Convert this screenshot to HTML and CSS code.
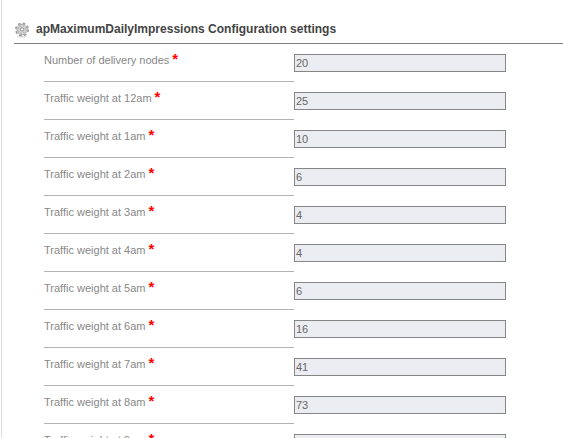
FILE: index.html
```html
<!DOCTYPE html>
<html lang="en">
<head>
    <meta charset="UTF-8">
    <meta name="viewport" content="width=device-width, initial-scale=1.0">
    <title>apMaximumDailyImpressions Configuration settings</title>
    <link rel="stylesheet" href="styles.css">
</head>
<body>
    <form class="settings">
        <div class="settings-header">
            <svg class="gear" viewBox="0 0 16 16" aria-hidden="true">
                <ellipse cx="8" cy="14.5" rx="5" ry="1" fill="#ddd"/>
                <circle cx="8" cy="7.5" r="6.2" fill="none" stroke="#999" stroke-width="1.6" stroke-dasharray="2.6 2.27"/>
                <circle cx="8" cy="7.5" r="5.2" fill="#dcdcdc" stroke="#aaa"/>
                <circle cx="8" cy="7.5" r="3.6" fill="none" stroke="#b4b4b4" stroke-width="1.4" stroke-dasharray="1.6 1.23"/>
                <circle cx="8" cy="7.5" r="1.7" fill="#fff" stroke="#909090"/>
            </svg>
            <h1>apMaximumDailyImpressions Configuration settings</h1>
        </div>
        <div class="rows">
            <div class="row">
                <label for="nodes">Number of delivery nodes<span class="required">*</span></label>
                <input type="text" id="nodes" value="20">
            </div>
            <div class="row">
                <label for="weight0">Traffic weight at 12am<span class="required">*</span></label>
                <input type="text" id="weight0" value="25">
            </div>
            <div class="row">
                <label for="weight1">Traffic weight at 1am<span class="required">*</span></label>
                <input type="text" id="weight1" value="10">
            </div>
            <div class="row">
                <label for="weight2">Traffic weight at 2am<span class="required">*</span></label>
                <input type="text" id="weight2" value="6">
            </div>
            <div class="row">
                <label for="weight3">Traffic weight at 3am<span class="required">*</span></label>
                <input type="text" id="weight3" value="4">
            </div>
            <div class="row">
                <label for="weight4">Traffic weight at 4am<span class="required">*</span></label>
                <input type="text" id="weight4" value="4">
            </div>
            <div class="row">
                <label for="weight5">Traffic weight at 5am<span class="required">*</span></label>
                <input type="text" id="weight5" value="6">
            </div>
            <div class="row">
                <label for="weight6">Traffic weight at 6am<span class="required">*</span></label>
                <input type="text" id="weight6" value="16">
            </div>
            <div class="row">
                <label for="weight7">Traffic weight at 7am<span class="required">*</span></label>
                <input type="text" id="weight7" value="41">
            </div>
            <div class="row">
                <label for="weight8">Traffic weight at 8am<span class="required">*</span></label>
                <input type="text" id="weight8" value="73">
            </div>
            <div class="row">
                <label for="weight9">Traffic weight at 9am<span class="required">*</span></label>
                <input type="text" id="weight9">
            </div>
        </div>
    </form>
</body>
</html>
```

FILE: styles.css
```css
* {
    box-sizing: border-box;
}
body {
    font-family: Arial, "Liberation Sans", sans-serif;
    font-size: 11px;
    margin: 0;
    background: #fff;
    color: #888;
}
.settings {
    min-height: 100vh;
    margin-left: 1px;
    padding: 16px 0 0 12px;
    border-left: 1px solid #ddd;
}
.settings-header {
    display: flex;
    align-items: center;
    gap: 6px;
    height: 28px;
    border-bottom: 1px solid #808080;
}
.gear {
    width: 16px;
    height: 16px;
}
h1 {
    margin: 0;
    padding-bottom: 2px;
    font-size: 12px;
    line-height: 16px;
    color: #444;
}
.rows {
    padding-left: 30px;
}
.row {
    display: flex;
    height: 38px;
}
.row label {
    width: 250px;
    padding-top: 8px;
    line-height: 16px;
    border-bottom: 1px solid #b3b3b3;
}
.required {
    margin-left: 3px;
    font-size: 15px;
    font-weight: bold;
    line-height: 14px;
    color: #f00;
}
.row input {
    width: 212px;
    height: 18px;
    margin: 10px 0 0;
    padding: 0 1px;
    border: 1px solid #868686;
    border-radius: 0;
    background: #ecedf2;
    font-family: inherit;
    font-size: 11px;
    color: #666;
}
```
